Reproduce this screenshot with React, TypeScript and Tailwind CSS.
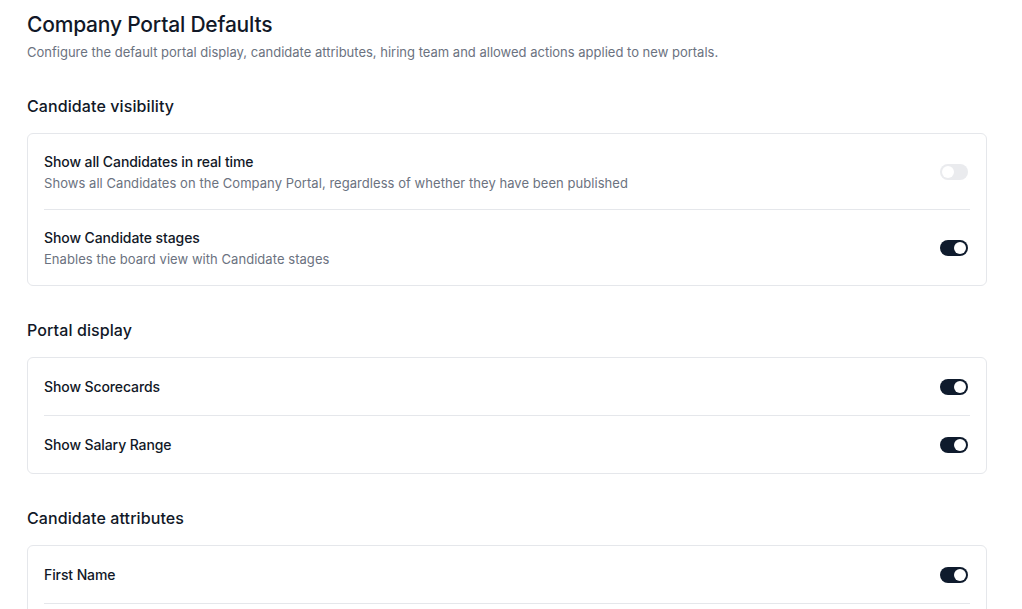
import { useState } from "react";

type Setting = {
  id: string;
  label: string;
  description?: string;
  enabled: boolean;
  disabled?: boolean;
};

type Section = {
  title: string;
  settings: Setting[];
};

const initialSections: Section[] = [
  {
    title: "Candidate visibility",
    settings: [
      {
        id: "realtime",
        label: "Show all Candidates in real time",
        description:
          "Shows all Candidates on the Company Portal, regardless of whether they have been published",
        enabled: false,
        disabled: true,
      },
      {
        id: "stages",
        label: "Show Candidate stages",
        description: "Enables the board view with Candidate stages",
        enabled: true,
      },
    ],
  },
  {
    title: "Portal display",
    settings: [
      { id: "scorecards", label: "Show Scorecards", enabled: true },
      { id: "salary", label: "Show Salary Range", enabled: true },
    ],
  },
  {
    title: "Candidate attributes",
    settings: [
      { id: "firstName", label: "First Name", enabled: true },
      { id: "lastName", label: "Last Name", enabled: true },
      { id: "email", label: "Email", enabled: true },
    ],
  },
];

function Toggle({
  checked,
  disabled,
  onChange,
}: {
  checked: boolean;
  disabled?: boolean;
  onChange: () => void;
}) {
  return (
    <button
      type="button"
      role="switch"
      aria-checked={checked}
      disabled={disabled}
      onClick={onChange}
      className={`flex h-4 w-7 shrink-0 items-center rounded-full p-0.5 transition-colors ${
        checked ? "justify-end bg-[#0f1b2d]" : "justify-start bg-[#e5e7eb]"
      } ${disabled ? "opacity-80" : ""}`}
    >
      <span className="block h-3 w-3 rounded-full bg-white" />
    </button>
  );
}

export default function App() {
  const [sections, setSections] = useState(initialSections);

  const toggle = (sectionIdx: number, id: string) => {
    setSections((prev) =>
      prev.map((s, i) =>
        i !== sectionIdx
          ? s
          : {
              ...s,
              settings: s.settings.map((st) =>
                st.id === id ? { ...st, enabled: !st.enabled } : st
              ),
            }
      )
    );
  };

  return (
    <div
      className="min-h-screen bg-white pl-[27px] pt-[10px] text-[#111827]"
      style={{ fontFamily: "Inter, 'Noto Sans', sans-serif" }}
    >
      <div className="w-[960px]">
        <h1 className="text-[21px] font-medium leading-[30px] tracking-[-0.2px]">
          Company Portal Defaults
        </h1>
        <p className="mt-[2px] text-[13px] leading-5 text-[#6b7280]">
          Configure the default portal display, candidate attributes, hiring team and allowed
          actions applied to new portals.
        </p>

        {sections.map((section, si) => (
          <section key={section.title} className="mt-[32px]">
            <h2 className="text-base font-medium leading-6 tracking-[0.1px]">{section.title}</h2>
            <div className="mt-[15px] rounded-md border border-[#e5e7eb] px-4">
              {section.settings.map((s, idx) => (
                <div key={s.id}>
                  {idx > 0 && <div className="h-px bg-[#e5e7eb]" />}
                  <div
                    className={`flex items-center justify-between pt-px ${
                      s.description ? "h-[75px]" : "h-[57px]"
                    }`}
                  >
                    <div>
                      <div className="text-sm font-medium leading-5 tracking-[-0.1px]">
                        {s.label}
                      </div>
                      {s.description && (
                        <div className="mt-px text-[13px] leading-5 tracking-[0.05px] text-[#6b7280]">
                          {s.description}
                        </div>
                      )}
                    </div>
                    <div className="pr-[2px]">
                      <Toggle
                        checked={s.enabled}
                        disabled={s.disabled}
                        onChange={() => toggle(si, s.id)}
                      />
                    </div>
                  </div>
                </div>
              ))}
            </div>
          </section>
        ))}
      </div>
    </div>
  );
}
